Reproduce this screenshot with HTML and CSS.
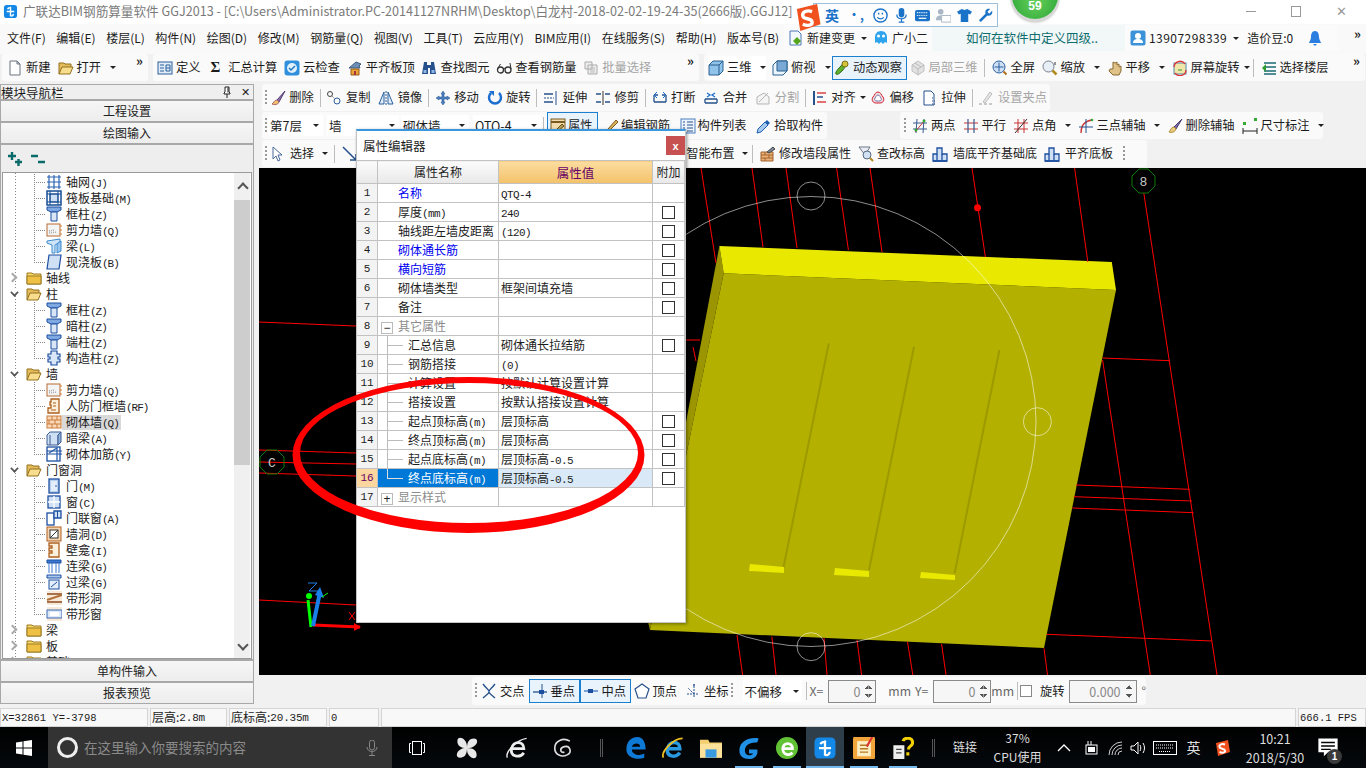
FILE: index.html
```html
<!DOCTYPE html>
<html lang="zh-CN">
<head>
<meta charset="utf-8">
<title>广联达BIM钢筋算量软件 GGJ2013</title>
<link rel="stylesheet" href="styles.css">
</head>
<body>
<svg class="sprite" aria-hidden="true">
<defs>
<symbol id="pinb" viewBox="0 0 12 12"><path d="M4 1h4v5l1 1v1H3V7l1-1zM6 8v4" fill="#fff" stroke="#222"/><path d="M7 1.500v5" stroke="#222"/></symbol>
<symbol id="app" viewBox="0 0 16 16"><rect x="1" y="1" width="14" height="14" rx="3" fill="#1488e6"/><path d="M8 3v10M4 8h8M5 5.500a2 2 0 0 1 3-1M11 10.500a2 2 0 0 1-3 2" stroke="#fff" stroke-width="1.500" fill="none"/></symbol>
<symbol id="doc" viewBox="0 0 16 16"><path d="M3 1h7l3 3v11H3z" fill="#fff" stroke="#6b7280"/><path d="M10 1v3h3z" fill="#d5dbe5" stroke="#6b7280"/></symbol>
<symbol id="newchg" viewBox="0 0 16 16"><path d="M2 1h8l3 3v11H2z" fill="#f4f9ff" stroke="#4b78b4"/><path d="M9 7l4 4-4 4-4-4z" fill="#55a51c"/></symbol>
<symbol id="ghost" viewBox="0 0 16 16"><path d="M8 1c4 0 6 3 6 6v6l-2-1-2 2-2-2-2 2-2-2-2 1V7c0-3 2-6 6-6z" fill="#2ea4ee"/><circle cx="5.500" cy="6" r="1.500" fill="#fff"/><circle cx="10.500" cy="6" r="1.500" fill="#fff"/></symbol>
<symbol id="user" viewBox="0 0 16 16"><rect x=".5" y=".5" width="15" height="15" rx="2" fill="#3c92d8"/><circle cx="8" cy="6" r="3" fill="#fff"/><path d="M3 13c0-3 2-4 5-4s5 1 5 4z" fill="#fff"/></symbol>
<symbol id="bell" viewBox="0 0 16 16"><path d="M8 1c3 0 4 3 4 6 0 3 2 5 2 6H2c0-1 2-3 2-6 0-3 1-6 4-6z" fill="#2a7ee0"/><path d="M6 14h4l-2 2z" fill="#2a7ee0"/></symbol>
<symbol id="folderopen" viewBox="0 0 16 16"><path d="M1 14V3h5l1 1h6v3" fill="#e4bc5c" stroke="#93701e"/><path d="M1 14l3-7h11l-3 7z" fill="#f8de8c" stroke="#93701e"/></symbol>
<symbol id="folder" viewBox="0 0 16 16"><path d="M1 14V3h5l1 1h8v10z" fill="#f6d768" stroke="#9c7a22"/><path d="M1 6h14v8H1z" fill="#eec145" stroke="#9c7a22"/></symbol>
<symbol id="define" viewBox="0 0 16 16"><rect x="1" y="2" width="14" height="12" fill="#e1ecf8" stroke="#2a5f9e"/><path d="M3 5h4M3 8h4M3 11h4M9 5h4v6H9zM9 8h4" stroke="#2a5f9e" fill="none"/></symbol>
<symbol id="cloud" viewBox="0 0 16 16"><rect x=".5" y=".5" width="15" height="15" rx="3" fill="#2f8fdc"/><path d="M3 8a5 5 0 0 1 10 0 5 5 0 0 1-10 0z" fill="#dff0fb"/><path d="M5 8l2 2 4-4" stroke="#1f77c2" stroke-width="1.500" fill="none"/></symbol>
<symbol id="house" viewBox="0 0 16 16"><path d="M2 8l7-6 5 2-2 2 1 2H2z" fill="#6d8fb5" stroke="#3a5a80"/><path d="M4 9h8v6H4z" fill="#e8a43a" stroke="#9a5a12"/><path d="M7 11h2v4H7z" fill="#a33"/></symbol>
<symbol id="binoc" viewBox="0 0 16 16"><path d="M3 2h3v3h4V2h3l2 12H9V8H7v6H1z" fill="#27518c"/><path d="M2.500 10h3v3h-3zM10.500 10h3v3h-3z" fill="#8fb6e6"/></symbol>
<symbol id="glass" viewBox="0 0 16 16"><circle cx="4.500" cy="10" r="3" fill="none" stroke="#333" stroke-width="1.300"/><circle cx="12" cy="10" r="3" fill="none" stroke="#333" stroke-width="1.300"/><path d="M7 9c1-1 1.500-1 2 0M1.500 9l3-5M15 9l-1-6" stroke="#333" fill="none"/></symbol>
<symbol id="batch" viewBox="0 0 16 16"><path d="M2 2h7v7H2zM5 5h9v9H5z" fill="#eee" stroke="#aaa"/><path d="M7 8h5M7 10h5M7 12h5" stroke="#bbb"/></symbol>
<symbol id="cube" viewBox="0 0 16 16"><path d="M1 5l4-4h10v10l-4 4H1z" fill="#8fc3ea" stroke="#295f8d"/><path d="M1 5h10v10M11 5l4-4" fill="none" stroke="#295f8d"/></symbol>
<symbol id="cubeb" viewBox="0 0 16 16"><path d="M1 5l4-4h10v10l-4 4H1z" fill="#eef6fd" stroke="#295f8d"/><path d="M5 1h10v10H5z" fill="#7aa9d6" stroke="#295f8d"/></symbol>
<symbol id="orbit" viewBox="0 0 16 16"><path d="M11 2c2 2 0 6-3 9s-5 4-6 3 1-4 4-7 4-6 5-5z" fill="#5fb12f" stroke="#2c6b13"/><circle cx="11" cy="4" r="3" fill="#d4c43c" stroke="#7c7014"/></symbol>
<symbol id="local" viewBox="0 0 16 16"><path d="M8 1l6 4v6l-6 4-6-4V5z" fill="#e2e2e2" stroke="#c0c0c0"/><path d="M2 5l6 4 6-4M8 9v6M5 3l6 4" stroke="#bbb" fill="none"/></symbol>
<symbol id="magblue" viewBox="0 0 16 16"><circle cx="7" cy="7" r="6" fill="#cfe0f5" stroke="#2a5f9e"/><path d="M7 2.500v9M2.500 7h9" stroke="#2a5f9e"/><path d="M11.500 11.500l3 3" stroke="#b26d1c" stroke-width="2"/></symbol>
<symbol id="mag" viewBox="0 0 16 16"><circle cx="6.500" cy="6.500" r="5.500" fill="#e8eef5" stroke="#78808c"/><path d="M10.500 10.500l4 4" stroke="#b28c1c" stroke-width="2.500"/><path d="M13 2v3" stroke="#333"/></symbol>
<symbol id="hand" viewBox="0 0 16 16"><path d="M3 9l-1 2 4 4h6l2-4V6l-2 1V4l-2 1V2L8 3 6 2v7z" fill="#e0c288" stroke="#8a6b30"/></symbol>
<symbol id="rotscr" viewBox="0 0 16 16"><rect x="2" y="3" width="12" height="11" fill="#f0e6a8" stroke="#58a"/><path d="M2 7a6 6 0 0 1 11-3M14 10a6 6 0 0 1-11 3" fill="none" stroke="#d33" stroke-width="1.300"/><path d="M6 10h4" stroke="#3a8f3a"/></symbol>
<symbol id="floors" viewBox="0 0 16 16"><path d="M3 3h12M3 7h12M3 11h12M3 14h12" stroke="#1a6b74" stroke-width="1.500"/><path d="M5 4L1 8l4 4" fill="#2c9a2c"/></symbol>
<symbol id="brush" viewBox="0 0 16 16"><path d="M15 1L7 10l2 2z" fill="#8b6db0" stroke="#554070"/><path d="M7 10c-3 0-3 3-5 4 2 1 6 1 7-2z" fill="#f0c070" stroke="#a66"/></symbol>
<symbol id="copy" viewBox="0 0 16 16"><circle cx="4" cy="4" r="2.500" fill="none" stroke="#444"/><circle cx="11" cy="11" r="3" fill="none" stroke="#2a5f9e"/><path d="M6 6l3 3" stroke="#666" stroke-dasharray="1 1"/></symbol>
<symbol id="mirror" viewBox="0 0 16 16"><path d="M6 2L1 14h5zM10 2l5 12h-5z" fill="#e0ecf8" stroke="#2a5f9e"/><path d="M8 1v14" stroke="#2a5f9e" stroke-dasharray="2 1"/></symbol>
<symbol id="move" viewBox="0 0 16 16"><path d="M8 1l2 3H9v3h3V6l3 2-3 2V9H9v3h1l-2 3-2-3h1V9H4v1L1 8l3-2v1h3V4H6z" fill="#4a7fbf" stroke="#27518c" stroke-width=".5"/></symbol>
<symbol id="rotate" viewBox="0 0 16 16"><path d="M4 3a6 6 0 1 0 8 0" fill="none" stroke="#1c6fd0" stroke-width="2.500"/><path d="M2 1h5v5z" fill="#1c6fd0"/></symbol>
<symbol id="extend" viewBox="0 0 16 16"><path d="M1 4h9M1 12h9" stroke="#27518c" stroke-width="1.500"/><path d="M13 1v14" stroke="#27518c"/><path d="M1 8h10" stroke="#27518c" stroke-dasharray="2 1"/></symbol>
<symbol id="trim" viewBox="0 0 16 16"><path d="M1 4h5M10 4h5M1 12h5M10 12h5" stroke="#27518c" stroke-width="1.500"/><path d="M8 1v14" stroke="#333"/></symbol>
<symbol id="break" viewBox="0 0 16 16"><path d="M2 5h4M10 5h4M2 12h12M2 5v7M14 5v7" fill="none" stroke="#27518c" stroke-width="1.300"/><path d="M5 2l-3 3 3 3M11 2l3 3-3 3" fill="none" stroke="#1c6fd0"/></symbol>
<symbol id="merge" viewBox="0 0 16 16"><path d="M2 9h12M2 13h12M2 9v4M14 9v4" fill="none" stroke="#27518c" stroke-width="1.300"/><path d="M4 3l3 2-3 2M12 3L9 5l3 2" fill="none" stroke="#1c6fd0" stroke-width="1.300"/></symbol>
<symbol id="split" viewBox="0 0 16 16"><path d="M2 14h12V7L9 3 2 7zM4 12l9-9" fill="#f4f4f4" stroke="#b5b5b5"/></symbol>
<symbol id="align" viewBox="0 0 16 16"><path d="M2 1v14" stroke="#27518c" stroke-width="2"/><path d="M5 3h9M5 12h9" stroke="#d44" stroke-width="1.500"/><path d="M5 7h6" stroke="#27518c" stroke-width="1.500"/></symbol>
<symbol id="offset" viewBox="0 0 16 16"><path d="M8 2c3 0 3 3 5 5 2 3 0 6-3 6H6c-3 0-5-3-3-6 2-2 2-5 5-5z" fill="#f6dede" stroke="#c23"/><path d="M8 5c2 0 2 2 3 3 1 2 0 3-2 3H7c-2 0-3-1-2-3 1-1 1-3 3-3z" fill="#fff" stroke="#77a"/></symbol>
<symbol id="stretch" viewBox="0 0 16 16"><path d="M2 1h7l3 3v11H2z" fill="#fff" stroke="#27518c"/><path d="M10 8l2 0M10 11l3 0M10 14h3" stroke="#27518c" stroke-dasharray="1 1"/></symbol>
<symbol id="grip" viewBox="0 0 16 16"><path d="M5 12L12 2l2 2-7 9z" fill="#e8e8e8" stroke="#bbb"/><path d="M1 14h3M6 14h3M11 14h3" stroke="#bbb" stroke-width="1.500"/></symbol>
<symbol id="prop" viewBox="0 0 16 16"><rect x="1" y="1" width="14" height="14" fill="#f0dcae" stroke="#7a5a1e"/><path d="M1 4h14" stroke="#7a5a1e" stroke-width="2"/><path d="M4 14l8-8 2 2-8 7z" fill="#b69a5a" stroke="#6b5214"/></symbol>
<symbol id="editrebar" viewBox="0 0 16 16"><path d="M1 13h14" stroke="#333" stroke-width="1.500"/><path d="M5 11l8-9 2 2-8 8-3 1z" fill="#d9b35c" stroke="#7a5a1e"/></symbol>
<symbol id="list" viewBox="0 0 16 16"><rect x="1" y="1" width="14" height="14" fill="#eef4fb" stroke="#4a7fbf"/><path d="M3 4h2M3 7h2M3 10h2M3 13h2M7 4h6M7 7h6M7 10h6M7 13h6" stroke="#27518c"/></symbol>
<symbol id="picker" viewBox="0 0 16 16"><path d="M11 2l3 3-2 2-3-3z" fill="#1c5fb0"/><path d="M9 4l3 3-7 7-4 1 1-4z" fill="#a5c8ef" stroke="#1c5fb0"/></symbol>
<symbol id="twop" viewBox="0 0 16 16"><path d="M1 5h14M1 11h14M5 1l-1 14M12 1l-1 14" stroke="#3a5a90"/><path d="M3 14L13 2" stroke="#c33"/><circle cx="4" cy="12" r="1.500" fill="#3a3"/><circle cx="12" cy="3" r="1.500" fill="#3a3"/></symbol>
<symbol id="para" viewBox="0 0 16 16"><path d="M1 5h14M1 11h14" stroke="#c33" stroke-width="1.200"/><path d="M5 1v14M11 1v14" stroke="#3a5a90" stroke-width="1.200"/></symbol>
<symbol id="angle" viewBox="0 0 16 16"><path d="M1 5h14M1 11h14M5 1v14M11 1v14" stroke="#c33"/><path d="M2 15L14 1" stroke="#333"/></symbol>
<symbol id="threep" viewBox="0 0 16 16"><path d="M3 15C3 7 7 3 14 2" fill="none" stroke="#c33" stroke-width="1.300"/><path d="M1 9h14M8 1v14" stroke="#27518c"/><circle cx="14" cy="2" r="1.300" fill="#3a3"/></symbol>
<symbol id="delaxis" viewBox="0 0 16 16"><path d="M15 1L7 9l2 2z" fill="#7a68a8" stroke="#4a3d70"/><path d="M7 9c-3 0-3 3-5 5 3 1 6 0 7-3z" fill="#e8cc80" stroke="#b08a30"/></symbol>
<symbol id="dim" viewBox="0 0 16 16"><rect x="1" y="4" width="3" height="3" fill="#3a3"/><rect x="12" y="0" width="3" height="3" fill="#3a3"/><path d="M1 13h14M1 10v6M15 10v6" stroke="#222"/></symbol>
<symbol id="pointer" viewBox="0 0 16 16"><path d="M2 1v12l3-3 2 5 2-1-2-5h4z" fill="#fff" stroke="#4a6a9a"/></symbol>
<symbol id="linearr" viewBox="0 0 16 16"><path d="M1 1l13 13M14 8v6H8" fill="none" stroke="#27518c" stroke-width="1.500"/></symbol>
<symbol id="brickedit" viewBox="0 0 16 16"><path d="M1 6h12v9H1z" fill="#e9b27a" stroke="#a2622a"/><path d="M1 9h12M1 12h12M5 6v3M9 9v3M5 12v3" stroke="#a2622a"/><path d="M7 6l6-5 2 2-6 4z" fill="#7a8a9a" stroke="#444"/></symbol>
<symbol id="qelev" viewBox="0 0 16 16"><path d="M1 1h11L7 9z" fill="#eaeef4" stroke="#6a7888"/><circle cx="9" cy="9" r="4" fill="#cfe1f3" stroke="#5a6a80"/><path d="M12 12l3 3" stroke="#b58a1c" stroke-width="2"/></symbol>
<symbol id="walign" viewBox="0 0 16 16"><path d="M1 15V8h4V2h5v6h5v7z" fill="#cfe0f5" stroke="#1d4fa0" stroke-width="1.300"/><path d="M5 15V8M10 15V8M1 15h14" stroke="#1d4fa0" stroke-width="1.300"/></symbol>
<symbol id="xpt" viewBox="0 0 16 16"><path d="M2 1c3 4 5 5 6 7s-3 4-6 7M14 1c-3 4-5 5-6 7s3 4 6 7" fill="none" stroke="#27518c" stroke-width="1.300"/></symbol>
<symbol id="perp" viewBox="0 0 16 16"><path d="M1 9h14" stroke="#27518c" stroke-width="1.300"/><path d="M10 1v14" stroke="#27518c"/><rect x="7" y="7" width="5" height="4" fill="#1d4fa0"/></symbol>
<symbol id="midp" viewBox="0 0 16 16"><path d="M1 8h14" stroke="#7aa0d6" stroke-width="2"/><rect x="5" y="6" width="5" height="4" fill="#1d4fa0"/></symbol>
<symbol id="vertex" viewBox="0 0 16 16"><path d="M8 1l7 5-3 9H4L1 6z" fill="#fff" stroke="#27518c" stroke-width="1.200"/></symbol>
<symbol id="coord" viewBox="0 0 16 16"><path d="M2 11h12M9 3v12M9 11l-6-6" stroke="#27518c" stroke-dasharray="2 1"/><circle cx="9" cy="2" r="1" fill="#27518c"/></symbol>
<symbol id="plus2" viewBox="0 0 16 16"><path d="M1 5h8M5 1v8M8 11h7M11.500 8v7" stroke="#0b6b6b" stroke-width="2.400"/></symbol>
<symbol id="minus2" viewBox="0 0 16 16"><path d="M1 5h7M8 11h7" stroke="#0b6b6b" stroke-width="2.400"/></symbol>
<symbol id="grid" viewBox="0 0 16 16"><path d="M1 3h14M1 8h14M1 13h14M3 1v14M8 1v14M13 1v14" stroke="#2a63b4" stroke-width="1.200"/></symbol>
<symbol id="raft" viewBox="0 0 16 16"><rect x="1" y="1" width="14" height="14" fill="#fff" stroke="#154d94" stroke-width="1.500"/><rect x="4" y="4" width="8" height="8" fill="#cfe0f5" stroke="#154d94"/><path d="M1 4h14M1 12h14M4 1v14M12 1v14" stroke="#154d94"/></symbol>
<symbol id="col" viewBox="0 0 16 16"><path d="M1 1h14v3l-4 2H5L1 4z" fill="#7fa8e0" stroke="#1d4fa0"/><path d="M5 6h6v9H5z" fill="#d8e6f8" stroke="#1d4fa0"/></symbol>
<symbol id="shear" viewBox="0 0 16 16"><rect x="1" y="2" width="13" height="12" fill="#f4f4f4" stroke="#b8682e"/><path d="M3 11l8-1M3 9l6-1" stroke="#aaa" stroke-dasharray="1 1" stroke-width="1.500"/><path d="M14 4h2M14 8h2M14 12h2" stroke="#d8812e"/></symbol>
<symbol id="beam" viewBox="0 0 16 16"><path d="M1 3l13-2v3L9 7v8H6V7L1 5z" fill="#cfe4f8" stroke="#3a8ad0"/><path d="M11 6l4-3v10l-4 2z" fill="#9cc6ee" stroke="#3a8ad0"/></symbol>
<symbol id="slab" viewBox="0 0 16 16"><path d="M3 1h12l-2 14H1z" fill="#cfe0f5" stroke="#1d4fa0" stroke-width="1.200"/></symbol>
<symbol id="ccol" viewBox="0 0 16 16"><path d="M5 1h6v3h3v3h-2v2h2v3h-3v3H5v-3H2V9h2V7H2V4h3z" fill="#d8e6f8" stroke="#1d4fa0" stroke-width="1.200"/></symbol>
<symbol id="fwall" viewBox="0 0 16 16"><path d="M5 1h8v14H2v-5h3V7H4V4h1z" fill="#fbf0dc" stroke="#b0601e" stroke-width="1.300"/><path d="M7 5h3M7 8h3M5 12h5" stroke="#b0601e"/></symbol>
<symbol id="brick" viewBox="0 0 16 16"><rect x="1" y="2" width="14" height="12" fill="#f8d8b8" stroke="#cc7a3a"/><path d="M1 6h14M1 10h14M6 2v4M11 2v4M3 6v4M9 6v4M6 10v4M11 10v4" stroke="#cc7a3a"/></symbol>
<symbol id="hbeam" viewBox="0 0 16 16"><path d="M1 5l3-3h11l-3 3v10H1z" fill="#cfe0f5" stroke="#3a5a90"/><path d="M4 5v10M12 5l3-3v10l-3 3z" fill="#8fb0da" stroke="#3a5a90"/></symbol>
<symbol id="brebar" viewBox="0 0 16 16"><rect x="1" y="1" width="13" height="14" fill="#fff" stroke="#1d4fa0" stroke-width="1.300"/><path d="M3 7l8-5v13" fill="none" stroke="#2a63b4" stroke-width="1.300"/><path d="M1 5h15M1 8h15" stroke="#1d4fa0"/></symbol>
<symbol id="door" viewBox="0 0 16 16"><rect x="3" y="1" width="10" height="14" fill="#b8d0f0" stroke="#1d4fa0" stroke-width="1.300"/><rect x="5" y="3" width="6" height="10" fill="#e4eefa"/><circle cx="10" cy="8" r=".8" fill="#1d4fa0"/></symbol>
<symbol id="window" viewBox="0 0 16 16"><rect x="2" y="2" width="12" height="12" fill="#cfe0f5" stroke="#1d4fa0" stroke-width="1.300"/><path d="M8 2v12M2 8h12" stroke="#fff" stroke-width="1.300"/></symbol>
<symbol id="doorwin" viewBox="0 0 16 16"><rect x="1" y="3" width="7" height="12" fill="#fff" stroke="#1d4fa0" stroke-width="1.300"/><path d="M8 1h7v7H8z" fill="#cfe0f5" stroke="#1d4fa0" stroke-width="1.300"/><path d="M11.500 1v7" stroke="#1d4fa0"/></symbol>
<symbol id="hole" viewBox="0 0 16 16"><rect x="1" y="1" width="14" height="14" fill="#f4d4b0" stroke="#b0601e"/><rect x="4" y="4" width="8" height="8" fill="#fff" stroke="#333"/><path d="M4 12l8-8" stroke="#333"/></symbol>
<symbol id="niche" viewBox="0 0 16 16"><path d="M3 1h10v14H3v-4h3V9H3V6h3V4H3z" fill="#fbf0dc" stroke="#b0601e" stroke-width="1.300"/></symbol>
<symbol id="lintel" viewBox="0 0 16 16"><path d="M1 2h14v3H1z" fill="#3a7ad0" stroke="#1d4fa0"/><path d="M3 5v10M6 5v10M10 5v10M13 5v10" stroke="#3a7ad0"/></symbol>
<symbol id="gliang" viewBox="0 0 16 16"><path d="M1 1h14v3H1z" fill="#a8c8ee" stroke="#1d4fa0"/><rect x="3" y="6" width="10" height="9" fill="#e4eefa" stroke="#1d4fa0"/><path d="M5 13l6-5" stroke="#1d4fa0"/></symbol>
<symbol id="bandhole" viewBox="0 0 16 16"><rect x="1" y="1" width="15" height="14" fill="#f8e8d8"/><path d="M1 4h15M1 12h15" stroke="#8a4a1e" stroke-width="1.500"/><path d="M1 10l15-5" stroke="#b0703a" stroke-width="2"/></symbol>
<symbol id="bandwin" viewBox="0 0 16 16"><rect x="1" y="1" width="15" height="14" fill="#f8e8d8"/><rect x="1" y="4" width="15" height="8" fill="#dce8f8" stroke="#3a6ab0"/><rect x="4" y="6" width="9" height="4" fill="#fff"/></symbol>
<symbol id="sogou" viewBox="0 0 16 16"><path d="M2 3l12-3 2 12-12 4z" fill="#f0511e"/><path d="M11 4.500C8 3.500 5 4.500 5.500 7s5 1 5.500 3.500-3 2.500-5.500 1.500" fill="none" stroke="#fff" stroke-width="2"/></symbol>
<symbol id="smile" viewBox="0 0 16 16"><circle cx="8" cy="8" r="7" fill="none" stroke="#1b73c9" stroke-width="1.500"/><path d="M6 5v2M10 5v2" stroke="#1b73c9" stroke-width="1.500"/><path d="M4.500 10c2 2 5 2 7 0" fill="none" stroke="#1b73c9" stroke-width="1.300"/></symbol>
<symbol id="micb" viewBox="0 0 16 16"><rect x="5" y="0" width="6" height="10" rx="3" fill="#1b73c9"/><path d="M3 7c0 6 10 6 10 0M8 12v3M5 15h6" fill="none" stroke="#1b73c9" stroke-width="1.300"/></symbol>
<symbol id="kbb" viewBox="0 0 16 16"><rect x="0" y="2" width="16" height="12" rx="2" fill="#1b73c9"/><path d="M2 5h12M2 8h12" stroke="#fff" stroke-dasharray="1 1" stroke-width="1.300"/><path d="M4 11h8" stroke="#fff" stroke-width="1.300"/></symbol>
<symbol id="ucard" viewBox="0 0 16 16"><circle cx="5" cy="4" r="3" fill="#a9b7c6"/><path d="M0 13c0-4 2-5 5-5s5 1 5 5z" fill="#a9b7c6"/><rect x="6" y="8" width="10" height="7" fill="#fff" stroke="#a9b7c6"/></symbol>
<symbol id="shirt" viewBox="0 0 16 16"><path d="M5 1l3 1 3-1 5 3-2 3-2-1v9H4V6L2 7 0 4z" fill="#1b73c9"/></symbol>
<symbol id="wrench" viewBox="0 0 16 16"><path d="M15 3l-3 3-2-2 3-3c-3-1-6 1-5 5L1 13l2 2 7-7c4 1 6-2 5-5z" fill="#1b73c9"/></symbol>
<symbol id="win" viewBox="0 0 16 16"><path d="M0 2.500l6.500-1V7.500H0zM7.500 1.300L16 0v7.500H7.500zM0 8.500h6.500v6L0 13.500zM7.500 8.500H16V16l-8.500-1.300z" fill="#fff"/></symbol>
<symbol id="mict" viewBox="0 0 16 16"><rect x="5.500" y="0" width="5" height="10" rx="2.500" fill="none" stroke="#888"/><path d="M3 7c0 6 10 6 10 0M8 12v3M5 15.500h6" fill="none" stroke="#888"/></symbol>
<symbol id="taskv" viewBox="0 0 16 16"><rect x="3.500" y="1.500" width="9" height="13" fill="none" stroke="#fff"/><path d="M2 3.500H.5v9H2M14 3.500h1.500v9H14" fill="none" stroke="#fff"/></symbol>
<symbol id="fan" viewBox="0 0 16 16"><path d="M8 8C3 8 1 6 1 3s3-3 5-1 2 4 2 6zM8 8c0-5 2-7 5-7s3 3 1 5-4 2-6 2zM8 8c5 0 7 2 7 5s-3 3-5 1-2-4-2-6zM8 8c0 5-2 7-5 7s-3-3-1-5 4-2 6-2z" fill="#e8e8e8"/></symbol>
<symbol id="ieo" viewBox="0 0 16 16"><path d="M3 8.500h10c0-6-8-6-9 0s6 7 9 3" fill="none" stroke="#eee" stroke-width="2"/><path d="M1 15C-1 11 8 2 15 1" fill="none" stroke="#eee"/></symbol>
<symbol id="gsp" viewBox="0 0 16 16"><path d="M13 3C8 0 2 3 2 8s5 7 9 5 2-7-2-6-3 5 0 4" fill="none" stroke="#ddd" stroke-width="1.200"/></symbol>
<symbol id="edge" viewBox="0 0 16 16"><path d="M1 9C1 3 5 0 9 0s6 4 6 9H5c0 4 6 5 9 3v3c-5 2-13 0-13-6zm4-2h6c0-3-5-3-6 0z" fill="#0f7ad6"/></symbol>
<symbol id="ie" viewBox="0 0 16 16"><path d="M3 8.500h10c0-6-8-6-9 0s6 7 9 3" fill="none" stroke="#2a9ae0" stroke-width="2.500"/><path d="M1 15C-1 11 8 1 15 1" fill="none" stroke="#f0c020" stroke-width="1.300"/></symbol>
<symbol id="tfold" viewBox="0 0 16 16"><path d="M0 2h6l1 2h9v11H0z" fill="#f4cf72"/><path d="M0 5h16v10H0z" fill="#fbe19a"/><rect x="4" y="9" width="8" height="6" fill="#3a9ae0"/></symbol>
<symbol id="gblue" viewBox="0 0 16 16"><path d="M15 1C8 0 1 3 1 10c0 4 3 6 7 6 4 0 7-3 6-7H8v3h3c-1 2-6 2-6-2 0-5 5-6 9-6z" fill="#1f90e6"/></symbol>
<symbol id="eg" viewBox="0 0 16 16"><circle cx="8" cy="8" r="8" fill="#62c236"/><path d="M4 8.500h8c0-5-7-5-7 0s5 5 7 3" fill="none" stroke="#fff" stroke-width="2"/></symbol>
<symbol id="notes" viewBox="0 0 16 16"><rect width="16" height="16" rx="1" fill="#f2a53a"/><rect x="3" y="3" width="10" height="11" fill="#fbeec4"/><path d="M5 6h6M5 8.500h6M5 11h6" stroke="#b87a20"/><path d="M14 0l-4 7" stroke="#d33" stroke-width="1.500"/></symbol>
<symbol id="help" viewBox="0 0 16 16"><rect x="1" y="6" width="8" height="10" fill="#eee"/><path d="M3 9h4M3 11.500h4" stroke="#444"/><path d="M8 3c1-3 7-3 7 1 0 3-3 2-3 5M11.500 11v2.500" fill="none" stroke="#f3d000" stroke-width="2.200"/></symbol>
<symbol id="caretup" viewBox="0 0 16 16"><path d="M2 11l6-6 6 6" fill="none" stroke="#fff" stroke-width="1.300"/></symbol>
<symbol id="batt" viewBox="0 0 16 16"><rect x="3" y="5" width="11" height="9" fill="none" stroke="#fff"/><rect x="5" y="7" width="7" height="5" fill="#fff"/><path d="M5 1v4M8 1v4" stroke="#fff"/></symbol>
<symbol id="wifi" viewBox="0 0 16 16"><path d="M2 15a13 13 0 0 1 13-13M5 15a10 10 0 0 1 10-10M8 15a7 7 0 0 1 7-7M11 15a4 4 0 0 1 4-4" fill="none" stroke="#ccc"/></symbol>
<symbol id="speak" viewBox="0 0 16 16"><path d="M1 6h3l4-4v12l-4-4H1z" fill="none" stroke="#fff"/><path d="M10 5c1 2 1 4 0 6M13 3c2 3 2 7 0 10" fill="none" stroke="#fff"/></symbol>
<symbol id="keyb" viewBox="0 0 24 16"><rect x=".5" y="1.500" width="23" height="13" fill="none" stroke="#fff"/><path d="M3 5h18M3 8h18M6 11.500h12" stroke="#fff" stroke-dasharray="1 1"/></symbol>
<symbol id="notif" viewBox="0 0 16 16"><path d="M1 1h14v10H8l-3 3v-3H1z" fill="#fff"/><path d="M3 4h10M3 6.500h10M3 9h7" stroke="#000"/></symbol>
</defs>
</svg>

<div class="app">
  <header class="titlebar">
    <svg class="i tapp"><use href="#app"/></svg>
    <span class="title">广联达BIM钢筋算量软件 GGJ2013 - [C:\Users\Administrator.PC-20141127NRHM\Desktop\白龙村-2018-02-02-19-24-35(2666版).GGJ12]</span>
    <div class="winbtns"><span class="wb wmin"></span><span class="wb wmax"></span><span class="wb wclose">✕</span></div>
  </header>

  <nav class="menubar">
    <div class="menus">
      <span>文件(F)</span><span>编辑(E)</span><span>楼层(L)</span><span>构件(N)</span><span>绘图(D)</span><span>修改(M)</span><span>钢筋量(Q)</span><span>视图(V)</span><span>工具(T)</span><span>云应用(Y)</span><span>BIM应用(I)</span><span>在线服务(S)</span><span>帮助(H)</span><span>版本号(B)</span>
    </div>
    <div class="mgrp mg1"><span class="t"><svg class="i"><use href="#newchg"/></svg>新建变更<i class="c"></i></span><span class="t gx"><svg class="i"><use href="#ghost"/></svg>广小二</span></div>
    <div class="ask">如何在软件中定义四级..</div>
    <div class="mgrp mg2"><span class="t"><svg class="i"><use href="#user"/></svg><span class="phone">13907298339</span><i class="c"></i></span><span class="t">造价豆:0</span><svg class="i bell"><use href="#bell"/></svg></div>
    <span class="more m1">»</span>
  </nav>

  <div class="tbrow r1">
    <div class="tg g11">
      <span class="t"><svg class="i"><use href="#doc"/></svg>新建</span>
      <span class="t"><svg class="i"><use href="#folderopen"/></svg>打开<i class="c"></i></span>
      <span class="more">»</span>
    </div>
    <div class="tg g12">
      <span class="t"><svg class="i"><use href="#define"/></svg>定义</span>
      <span class="t"><b class="sig">Σ</b>汇总计算</span>
      <span class="t"><svg class="i"><use href="#cloud"/></svg>云检查</span>
      <span class="t"><svg class="i"><use href="#house"/></svg>平齐板顶</span>
      <span class="t"><svg class="i"><use href="#binoc"/></svg>查找图元</span>
      <span class="t"><svg class="i"><use href="#glass"/></svg>查看钢筋量</span>
      <span class="t off"><svg class="i"><use href="#batch"/></svg>批量选择</span>
      <span class="more">»</span>
    </div>
    <div class="tg g13">
      <span class="t wh"><svg class="i"><use href="#cube"/></svg>三维<i class="c"></i></span>
      <span class="t"><svg class="i"><use href="#cubeb"/></svg>俯视<i class="c"></i></span>
      <span class="t sel"><svg class="i"><use href="#orbit"/></svg>动态观察</span>
      <span class="t off"><svg class="i"><use href="#local"/></svg>局部三维</span>
      <span class="sep"></span>
      <span class="t"><svg class="i"><use href="#magblue"/></svg>全屏</span>
      <span class="t"><svg class="i"><use href="#mag"/></svg>缩放<i class="c"></i></span>
      <span class="t"><svg class="i"><use href="#hand"/></svg>平移<i class="c"></i></span>
      <span class="t"><svg class="i"><use href="#rotscr"/></svg>屏幕旋转<i class="c tight"></i></span>
      <span class="sep"></span>
      <span class="t"><svg class="i"><use href="#floors"/></svg>选择楼层</span>
      <span class="more">»</span>
    </div>
  </div>

  <main class="work">
    <aside class="side">
      <div class="sidehead"><span>模块导航栏</span><svg class="pin"><use href="#pinb"/></svg><span class="xx">✕</span></div>
      <button class="navbtn">工程设置</button>
      <button class="navbtn">绘图输入</button>
      <section class="treewrap">
        <div class="treetools"><svg class="i"><use href="#plus2"/></svg><svg class="i"><use href="#minus2"/></svg></div>
        <div class="tree">
          <ul class="rows">
            <li class="l2"><svg class="i"><use href="#grid"/></svg><span>轴网<em>(J)</em></span></li>
            <li class="l2"><svg class="i"><use href="#raft"/></svg><span>筏板基础<em>(M)</em></span></li>
            <li class="l2"><svg class="i"><use href="#col"/></svg><span>框柱<em>(Z)</em></span></li>
            <li class="l2"><svg class="i"><use href="#shear"/></svg><span>剪力墙<em>(Q)</em></span></li>
            <li class="l2"><svg class="i"><use href="#beam"/></svg><span>梁<em>(L)</em></span></li>
            <li class="l2 last"><svg class="i"><use href="#slab"/></svg><span>现浇板<em>(B)</em></span></li>
            <li class="l1"><i class="ar rt"></i><svg class="i"><use href="#folder"/></svg><span>轴线</span></li>
            <li class="l1"><i class="ar dn"></i><svg class="i"><use href="#folderopen"/></svg><span>柱</span></li>
            <li class="l2"><svg class="i"><use href="#col"/></svg><span>框柱<em>(Z)</em></span></li>
            <li class="l2"><svg class="i"><use href="#col"/></svg><span>暗柱<em>(Z)</em></span></li>
            <li class="l2"><svg class="i"><use href="#col"/></svg><span>端柱<em>(Z)</em></span></li>
            <li class="l2 last"><svg class="i"><use href="#ccol"/></svg><span>构造柱<em>(Z)</em></span></li>
            <li class="l1"><i class="ar dn"></i><svg class="i"><use href="#folderopen"/></svg><span>墙</span></li>
            <li class="l2"><svg class="i"><use href="#shear"/></svg><span>剪力墙<em>(Q)</em></span></li>
            <li class="l2"><svg class="i"><use href="#fwall"/></svg><span>人防门框墙<em>(RF)</em></span></li>
            <li class="l2 cur"><svg class="i"><use href="#brick"/></svg><span>砌体墙<em>(Q)</em></span></li>
            <li class="l2"><svg class="i"><use href="#hbeam"/></svg><span>暗梁<em>(A)</em></span></li>
            <li class="l2 last"><svg class="i"><use href="#brebar"/></svg><span>砌体加筋<em>(Y)</em></span></li>
            <li class="l1"><i class="ar dn"></i><svg class="i"><use href="#folderopen"/></svg><span>门窗洞</span></li>
            <li class="l2"><svg class="i"><use href="#door"/></svg><span>门<em>(M)</em></span></li>
            <li class="l2"><svg class="i"><use href="#window"/></svg><span>窗<em>(C)</em></span></li>
            <li class="l2"><svg class="i"><use href="#doorwin"/></svg><span>门联窗<em>(A)</em></span></li>
            <li class="l2"><svg class="i"><use href="#hole"/></svg><span>墙洞<em>(D)</em></span></li>
            <li class="l2"><svg class="i"><use href="#niche"/></svg><span>壁龛<em>(I)</em></span></li>
            <li class="l2"><svg class="i"><use href="#lintel"/></svg><span>连梁<em>(G)</em></span></li>
            <li class="l2"><svg class="i"><use href="#gliang"/></svg><span>过梁<em>(G)</em></span></li>
            <li class="l2"><svg class="i"><use href="#bandhole"/></svg><span>带形洞</span></li>
            <li class="l2 last"><svg class="i"><use href="#bandwin"/></svg><span>带形窗</span></li>
            <li class="l1"><i class="ar rt"></i><svg class="i"><use href="#folder"/></svg><span>梁</span></li>
            <li class="l1"><i class="ar rt"></i><svg class="i"><use href="#folder"/></svg><span>板</span></li>
            <li class="l1"><i class="ar rt"></i><svg class="i"><use href="#folder"/></svg><span>基础</span></li>
          </ul>
          <div class="vbar"><span class="sb up"></span><span class="thumb"></span><span class="rest"></span><span class="sb down"></span></div>
        </div>
      </section>
      <button class="navbtn">单构件输入</button>
      <button class="navbtn">报表预览</button>
    </aside>

    <div class="right">
      <div class="tbrow r2">
        <div class="tg g21">
          <span class="dots"></span>
          <span class="t"><svg class="i"><use href="#brush"/></svg>删除</span><span class="sep"></span>
          <span class="t"><svg class="i"><use href="#copy"/></svg>复制</span>
          <span class="t"><svg class="i"><use href="#mirror"/></svg>镜像</span><span class="sep"></span>
          <span class="t"><svg class="i"><use href="#move"/></svg>移动</span>
          <span class="t"><svg class="i"><use href="#rotate"/></svg>旋转</span><span class="sep"></span>
          <span class="t"><svg class="i"><use href="#extend"/></svg>延伸</span>
          <span class="t"><svg class="i"><use href="#trim"/></svg>修剪</span><span class="sep"></span>
          <span class="t"><svg class="i"><use href="#break"/></svg>打断</span>
          <span class="t"><svg class="i"><use href="#merge"/></svg>合并</span>
          <span class="t off"><svg class="i"><use href="#split"/></svg>分割</span><span class="sep"></span>
          <span class="t"><svg class="i"><use href="#align"/></svg>对齐<i class="c"></i></span>
          <span class="t"><svg class="i"><use href="#offset"/></svg>偏移</span>
          <span class="t"><svg class="i"><use href="#stretch"/></svg>拉伸</span><span class="sep"></span>
          <span class="t off"><svg class="i"><use href="#grip"/></svg>设置夹点</span>
        </div>
      </div>
      <div class="tbrow r3">
        <div class="tg g31">
          <span class="dots"></span>
          <span class="combo cb1">第7层<i class="c"></i></span>
          <span class="combo cb2">墙<i class="c"></i></span>
          <span class="combo cb3">砌体墙<i class="c"></i></span>
          <span class="combo cb4">QTQ-4<i class="c"></i></span>
          <span class="sep"></span>
          <span class="t sel"><svg class="i"><use href="#prop"/></svg>属性</span>
          <span class="t"><svg class="i"><use href="#editrebar"/></svg>编辑钢筋</span>
          <span class="t"><svg class="i"><use href="#list"/></svg>构件列表</span>
          <span class="t"><svg class="i"><use href="#picker"/></svg>拾取构件</span>
        </div>
        <div class="tg g32">
          <span class="dots"></span>
          <span class="t"><svg class="i"><use href="#twop"/></svg>两点</span>
          <span class="t"><svg class="i"><use href="#para"/></svg>平行</span>
          <span class="t"><svg class="i"><use href="#angle"/></svg>点角<i class="c"></i></span>
          <span class="t"><svg class="i"><use href="#threep"/></svg>三点辅轴<i class="c"></i></span>
          <span class="t"><svg class="i"><use href="#delaxis"/></svg>删除辅轴</span>
          <span class="t"><svg class="i"><use href="#dim"/></svg>尺寸标注<i class="c"></i></span>
        </div>
      </div>
      <div class="tbrow r4">
        <div class="tg g41">
          <span class="dots"></span>
          <span class="t"><svg class="i"><use href="#pointer"/></svg>选择<i class="c"></i></span>
          <span class="sep"></span>
          <svg class="i"><use href="#linearr"/></svg>
          <span class="hidspace"></span>
          <span class="t sm">智能布置<i class="c"></i></span>
          <span class="sep"></span>
          <span class="t"><svg class="i"><use href="#brickedit"/></svg>修改墙段属性</span>
          <span class="t"><svg class="i"><use href="#qelev"/></svg>查改标高</span>
          <span class="t wd"><svg class="i"><use href="#walign"/></svg>墙底平齐基础底</span>
          <span class="t wd"><svg class="i"><use href="#walign"/></svg>平齐底板</span>
          <span class="dots"></span>
        </div>
      </div>

      <section class="canvas">
        <svg class="scene" viewBox="259 168 1107 507" aria-hidden="true">
          <polygon points="719.4,246 723.7,273.3 650,630 648,622" fill="#9a9500"/>
          <polygon points="723.7,273.300 1116,290 1044,648 650,630" fill="#b3b000"/>
          <polygon points="719.4,246 1111.8,262 1116,290 723.7,273.3" fill="#e8e800"/>
          <g stroke="#9d9a00" stroke-width="2"><path d="M828.8 343.300L783.3 568.300M914 346.700L869 570M999.4 350L954.7 573"/></g>
          <g fill="#e8e800"><polygon points="750,564 784,567 784,573 749,571"/><polygon points="835,568 869,571 869,577 834,575"/><polygon points="921,572 955,575 955,580 920,578"/></g>
          <g stroke="#f00" stroke-width="1" fill="none">
            <path d="M701 168L716 263M752 168L763 247M786 168L797 248M836.6 168L848.4 250M870 168L882 252M972 168L985.4 257M1074.6 168L1087.8 262M1143.8 193L1217 675"/>
            <path d="M1102.6 358L1170 360.700M1102.6 360L1150.300 675M1076 485L1189.700 489.300M1073.800 496.700L1192 501M1072.400 508L1193.600 512.700M1046.600 634.300L1212 641"/>
            <path d="M737 635L742.600 675M771.900 636.700L776 675M824 638L827 675M857 640L861.600 675M907.500 641.700L912.800 675M941.600 644L946 675M1044 648.300L1047.500 675"/>
            <path d="M686 340H700M693 347L696 361M259 322L356 326M259 450L356 453M259 462L356 464M259 473L356 476M259 600L356 605"/>
          </g>
          <circle cx="977.500" cy="207.700" r="3.500" fill="#f00"/>
          <g fill="none" stroke="#fff" stroke-opacity=".55">
            <circle cx="811" cy="421.500" r="225"/>
            <circle cx="811" cy="196" r="14"/>
            <circle cx="1037.400" cy="421.700" r="14"/>
            <circle cx="811" cy="646.700" r="14"/>
          </g>
          <g fill="none" stroke="#0a7a0a">
            <polygon points="1139,169 1148,169 1155,176 1155,186 1148,193 1139,193 1132,186 1132,176"/>
            <polygon points="267,450 277,450 284,457 284,467 277,474 267,474 260,467 260,457"/>
          </g>
          <text x="1143.500" y="186" class="axtxt">8</text>
          <text x="272" y="467" class="axtxt">C</text>
          <g>
            <path d="M313 625L360 627" stroke="#f00" stroke-width="3"/><path d="M354 623L361 627L354 631z" fill="#f00"/>
            <path d="M311 627L308 600" stroke="#0f0" stroke-width="3"/><circle cx="309" cy="596" r="3" fill="#0f0"/>
            <path d="M313 626L320 592" stroke="#1a7fe8" stroke-width="4"/><path d="M315 595L320 587L324 598z" fill="#1a7fe8"/>
            <path d="M308 583H317L309 591H318" fill="none" stroke="#1a7fe8"/>
            <path d="M322 597L328 593" stroke="#0f0"/>
            <path d="M349 612L355 620M355 612L349 620" stroke="#f00"/>
          </g>
        </svg>
      </section>

      <div class="tbrow snap">
        <div class="tg gsnap">
          <span class="dots"></span>
          <span class="t s0"><svg class="i"><use href="#xpt"/></svg>交点</span>
          <span class="t sel s1"><svg class="i"><use href="#perp"/></svg>垂点</span>
          <span class="t sel s2"><svg class="i"><use href="#midp"/></svg>中点</span>
          <span class="t"><svg class="i"><use href="#vertex"/></svg>顶点</span>
          <span class="t s3"><svg class="i"><use href="#coord"/></svg>坐标</span>
          <span class="dots"></span>
          <span class="combo cb5">不偏移<i class="c"></i></span>
          <span class="sep"></span>
          <span class="lb">X=</span>
          <span class="spin sp1">0<i class="spn"></i></span>
          <span class="lb">mm</span>
          <span class="lb">Y=</span>
          <span class="spin sp2">0<i class="spn"></i></span>
          <span class="lb mm2">mm</span>
          <span class="sep"></span>
          <span class="cbx"></span>
          <span class="rot">旋转</span>
          <span class="spin sp3">0.000<i class="spn"></i></span>
          <span class="lb">°</span>
        </div>
      </div>
    </div>
  </main>

  <footer class="status">
    <span class="st s-a mono">X=32861 Y=-3798</span>
    <span class="st s-b">层高:<em>2.8m</em></span>
    <span class="st s-c">底标高:<em>20.35m</em></span>
    <span class="st s-d mono">0</span>
    <span class="st s-e"></span>
    <span class="st s-f mono">666.1 FPS</span>
  </footer>

  <div class="taskbar">
    <span class="tk"><svg class="i tw"><use href="#win"/></svg></span>
    <span class="search"><i class="cort"></i><span class="stext">在这里输入你要搜索的内容</span><svg class="i smic"><use href="#mict"/></svg></span>
    <span class="tk"><svg class="i"><use href="#taskv"/></svg></span>
    <span class="tk"><svg class="i ti"><use href="#fan"/></svg></span>
    <span class="tk"><svg class="i ti"><use href="#ieo"/></svg></span>
    <span class="tk"><svg class="i ti"><use href="#gsp"/></svg></span>
    <span class="tk"><i class="tsep"></i></span>
    <span class="tk"><svg class="i ti"><use href="#edge"/></svg></span>
    <span class="tk"><svg class="i ti"><use href="#ie"/></svg></span>
    <span class="tk"><svg class="i ti"><use href="#tfold"/></svg></span>
    <span class="tk run"><svg class="i ti"><use href="#gblue"/></svg></span>
    <span class="tk run"><svg class="i ti"><use href="#eg"/></svg></span>
    <span class="tk run act"><svg class="i tl"><use href="#app"/></svg></span>
    <span class="tk run"><svg class="i ti"><use href="#notes"/></svg></span>
    <span class="tk run"><svg class="i ti"><use href="#help"/></svg></span>
    <span class="tk"><i class="tsep"></i></span>
    <span class="tk ttxt">链接</span>
    <span class="tk ttxt two"><span>37%</span><span>CPU使用</span></span>
    <span class="tk"><svg class="i"><use href="#caretup"/></svg></span>
    <span class="tk"><svg class="i"><use href="#batt"/></svg></span>
    <span class="tk"><svg class="i"><use href="#wifi"/></svg></span>
    <span class="tk"><svg class="i"><use href="#speak"/></svg></span>
    <span class="tk"><svg class="i kb"><use href="#keyb"/></svg></span>
    <span class="tk ttxt big">英</span>
    <span class="tk"><svg class="i"><use href="#sogou"/></svg></span>
    <span class="tk ttxt two clock"><span>10:21</span><span>2018/5/30</span></span>
    <span class="tk nf"><svg class="i ti"><use href="#notif"/></svg><b class="nbadge">1</b></span>
  </div>

  <div class="ball">59</div>
  <div class="ime">
    <svg class="imes"><use href="#sogou"/></svg>
    <b class="imeen">英</b><span class="imedot">•,</span>
    <svg class="i"><use href="#smile"/></svg><svg class="i"><use href="#micb"/></svg><svg class="i"><use href="#kbb"/></svg><svg class="i"><use href="#ucard"/></svg><svg class="i"><use href="#shirt"/></svg><svg class="i"><use href="#wrench"/></svg>
  </div>

  <section class="dialog">
    <div class="dhead"><span>属性编辑器</span><span class="dx">x</span></div>
    <table class="ptable">
      <colgroup><col class="c0"><col class="c1"><col class="c2"><col class="c3"></colgroup>
      <thead><tr><th></th><th>属性名称</th><th class="hv">属性值</th><th>附加</th></tr></thead>
      <tbody>
        <tr><td class="n">1</td><td class="nm blue">名称</td><td class="v"><em>QTQ-4</em></td><td></td></tr>
        <tr><td class="n">2</td><td class="nm">厚度<em>(mm)</em></td><td class="v"><em>240</em></td><td class="ck"><i></i></td></tr>
        <tr><td class="n">3</td><td class="nm">轴线距左墙皮距离</td><td class="v"><em>(120)</em></td><td class="ck"><i></i></td></tr>
        <tr><td class="n">4</td><td class="nm blue">砌体通长筋</td><td class="v"></td><td class="ck"><i></i></td></tr>
        <tr><td class="n">5</td><td class="nm blue">横向短筋</td><td class="v"></td><td class="ck"><i></i></td></tr>
        <tr><td class="n">6</td><td class="nm">砌体墙类型</td><td class="v">框架间填充墙</td><td class="ck"><i></i></td></tr>
        <tr><td class="n">7</td><td class="nm">备注</td><td class="v"></td><td class="ck"><i></i></td></tr>
        <tr><td class="n">8</td><td class="gp"><i class="bx">−</i>其它属性</td><td class="v"></td><td></td></tr>
        <tr><td class="n">9</td><td class="sub">汇总信息</td><td class="v">砌体通长拉结筋</td><td class="ck"><i></i></td></tr>
        <tr><td class="n">10</td><td class="sub">钢筋搭接</td><td class="v"><em>(0)</em></td><td></td></tr>
        <tr><td class="n">11</td><td class="sub">计算设置</td><td class="v">按默认计算设置计算</td><td></td></tr>
        <tr><td class="n">12</td><td class="sub">搭接设置</td><td class="v">按默认搭接设置计算</td><td></td></tr>
        <tr><td class="n">13</td><td class="sub">起点顶标高<em>(m)</em></td><td class="v">层顶标高</td><td class="ck"><i></i></td></tr>
        <tr><td class="n">14</td><td class="sub">终点顶标高<em>(m)</em></td><td class="v">层顶标高</td><td class="ck"><i></i></td></tr>
        <tr><td class="n">15</td><td class="sub">起点底标高<em>(m)</em></td><td class="v">层顶标高<em>-0.5</em></td><td class="ck"><i></i></td></tr>
        <tr class="on"><td class="n">16</td><td class="sub end">终点底标高<em>(m)</em></td><td class="v">层顶标高<em>-0.5</em></td><td class="ck"><i></i></td></tr>
        <tr><td class="n">17</td><td class="gp gp2"><i class="bx">+</i>显示样式</td><td class="v"></td><td></td></tr>
      </tbody>
    </table>
  </section>

  <svg class="ring" viewBox="0 0 1366 768" aria-hidden="true">
    <path fill="#f00" fill-rule="evenodd" d="M292.500 455a176 78 0 1 0 352 0a176 78 0 1 0-352 0zM300 453a169 70 0 1 1 338 0a169 70 0 1 1-338 0z"/>
  </svg>
</div>
</body>
</html>
```
FILE: styles.css
```css
* { box-sizing: border-box; }
html, body { margin: 0; width: 1366px; height: 768px; overflow: hidden; }
body { font: 12px/1.2 "Noto Sans CJK SC", "Liberation Sans", sans-serif; color: #1c1c1c; background: #f1f1f1; }
ul { list-style: none; margin: 0; padding: 0; }
em { font: 11px "Liberation Mono", monospace; letter-spacing: -.6px; }
i { font-style: normal; }
.sprite { position: absolute; width: 0; height: 0; }
.i { width: 16px; height: 16px; flex: none; display: block; }
.app { position: relative; width: 1366px; height: 768px; display: flex; flex-direction: column; overflow: hidden; }

.titlebar { height: 24px; background: #fff; display: flex; align-items: center; padding: 0 0 2px 3px; flex: none; }
.tapp { width: 15px; height: 15px; }
.title { margin-left: 5px; color: #7a7a7a; font-size: 12.620px; white-space: nowrap; }
.winbtns { display: flex; width: 138px; height: 22px; align-items: center; justify-content: space-between; padding: 0 20px 0 0; position: absolute; right: 0; top: 0; }
.wb { width: 10px; display: block; color: #999; }
.wmin { height: 1px; background: #999; margin-left: 18px; }
.wmax { height: 11px; border: 1px solid #999; }
.wclose { font-size: 13px; }

.menubar { height: 30px; background: #f9f9f9; display: flex; align-items: center; flex: none; position: relative; white-space: nowrap; padding-bottom: 2px; }
.menus { display: flex; gap: 10.600px; padding-left: 7px; width: 784px; }
.mgrp { display: flex; align-items: center; background: #fbfbfb; height: 26px; }
.mg1 { width: 148px; gap: 6px; padding-left: 4px; }
.gx { gap: 5px; }
.ask { width: 193px; height: 26px; line-height: 26px; color: #0e6e6e; font-size: 12.500px; padding-left: 34px; background: #f2f7f8; }
.mg2 { width: 213px; padding-left: 5px; gap: 8px; }
.phone { letter-spacing: .45px; }
.bell { margin-left: 6px; }
.more { font-size: 13px; font-weight: 700; line-height: 10px; align-self: flex-start; margin: 2px 5px 0 auto; }
.m1 { position: absolute; right: 0; top: 3px; }

.tbrow { display: flex; height: 28px; flex: none; white-space: nowrap; }
.r1 { height: 30px; padding: 0 0 3px 2px; gap: 5px; }
.tg { display: flex; align-items: center; background: #fafafa; height: 100%; border-radius: 3px; font-size: 12.250px; }
.t { display: inline-flex; align-items: center; gap: 3px; flex: none; height: 100%; }
.c { display: inline-block; width: 0; height: 0; border: 3.500px solid transparent; border-top-color: #222; border-bottom: 0; margin-left: 3px; }
.off { color: #a5a5a5; }
.sep { width: 1px; height: 18px; background: #bdbdbd; flex: none; }
.dots { width: 2px; height: 16px; flex: none; background: repeating-linear-gradient(#999 0 2px, transparent 2px 4px); }
.sig { font: 700 15px "Liberation Serif", serif; width: 16px; text-align: center; margin-right: 2px; }
.sel { background: #e9f3fc; outline: 1px solid #1b7fd0; outline-offset: -1px; }
.wh { background: #fff; }
.g11 { width: 146px; padding-left: 5px; gap: 7px; }
.g11 .c { margin-left: 6px; }
.g12 { width: 546px; padding-left: 4px; gap: 6.800px; }
.g13 { width: 661px; padding-left: 4px; gap: 6.500px; }
.g13 .t { height: 24px; }
.g13 .c { margin-left: 6px; }
.g13 .wh .c { margin-left: 5px; }
.g13 .c.tight { margin: 0 -3px 0 1px; }
.g13 .sel { padding: 0 2px; width: 75px; margin-left: -5px; }
.g13 .off { margin-left: -4px; }

.work { flex: none; height: 624px; display: flex; }
.side { width: 254px; flex: none; display: flex; flex-direction: column; }
.sidehead { height: 16px; display: flex; align-items: center; font-size: 12.500px; border: 1px solid #aaa; background: #efefef; }
.pin { margin-left: auto; width: 12px; height: 12px; margin-right: 8px; }
.xx { font-size: 11px; margin-right: 3px; }
.navbtn { height: 22px; flex: none; font: inherit; color: #222; background: linear-gradient(#f6f6f6, #ededed); border: 1px solid #a8a8a8; padding: 0; }
.treewrap { height: 516px; flex: none; border: 1px solid #a8a8a8; display: flex; flex-direction: column; padding: 0 1px; background: #eee; }
.treetools { height: 27px; flex: none; display: flex; align-items: center; gap: 7px; padding-left: 5px; }
.tree { flex: 1; min-height: 0; display: flex; background: #fff; border: 1px solid #9a9a9a; overflow: hidden; background-image: repeating-linear-gradient(#888 0 1px, transparent 1px 3px); background-size: 1px 100%; background-position: 12px 0; background-repeat: no-repeat; }
.rows { flex: 1; overflow: hidden; padding-top: 1px; }
.rows li { height: 16px; display: flex; align-items: center; position: relative; white-space: nowrap; font-size: 12px; }
.rows li em { letter-spacing: -1px; }
.l1 { padding-left: 23px; }
.l1 span { margin-left: 4px; }
.l2 { padding-left: 43px; background: repeating-linear-gradient(90deg, #888 0 1px, transparent 1px 2px) 31px 8px/11px 1px no-repeat, repeating-linear-gradient(#888 0 1px, transparent 1px 2px) 31px 0/1px 100% no-repeat; }
.l2.last { background: repeating-linear-gradient(90deg, #888 0 1px, transparent 1px 2px) 31px 8px/11px 1px no-repeat, repeating-linear-gradient(#888 0 1px, transparent 1px 2px) 31px 0/1px 9px no-repeat; }
.l2 span { margin-left: 4px; }
.cur span { background: #d9d9d9; padding-left: 4px; margin-left: 0; padding-right: 2px; }
.ar { position: absolute; left: 8px; top: 4px; width: 7px; height: 7px; border: solid #777; border-width: 0 2px 2px 0; }
.rt { transform: rotate(-45deg); left: 6px; background: #fff; border-color: #aaa; }
.dn { transform: rotate(45deg) scale(.85); top: 3px; background: #fff; border-color: #555; }
.vbar { width: 16px; flex: none; display: flex; flex-direction: column; background: #f0f0f0; margin-right: 1px; }
.sb { height: 27px; flex: none; position: relative; background: #f0f0f0; }
.sb::after { content: ""; position: absolute; left: 5px; width: 6px; height: 6px; border: solid #555; border-width: 2px 0 0 2px; transform: rotate(45deg); top: 11px; }
.down::after { transform: rotate(225deg); top: 10px; }
.thumb { height: 265px; background: #cdcdcd; flex: none; }
.rest { flex: 1; }

.right { flex: 1; min-width: 0; display: flex; flex-direction: column; }
.r2 .tg, .r3 .tg, .r4 .tg { height: 27px; }
.g21 { margin-left: 8px; width: 788px; padding-left: 3px; gap: 5.800px; }
.g21 .dots { margin-right: -3px; }
.g21 .t { gap: 3.500px; }
.g21 .t + .t { margin-left: 2px; }
.g21 .c { margin: 0 -4px 0 1px; }
.r3 { padding-bottom: 1px; }
.g31 { margin-left: 8px; width: 565px; padding-left: 3px; }
.g31 .t { gap: 2px; }
.combo { background: #fff; height: 21px; display: inline-flex; align-items: center; justify-content: space-between; padding: 0 4px 0 2px; flex: none; font-size: 12.500px; }
.combo .c { margin-left: 3px; }
.cb1 { width: 55px; margin-left: 1px; }
.cb2 { width: 72px; margin-left: 4px; }
.cb3 { width: 68px; margin-left: 2px; }
.cb4 { width: 68px; margin-left: 4px; margin-right: 2px; }
.g31 .sep { margin-right: 3px; }
.g31 .sel { width: 51px; padding-left: 3px; margin-right: 5px; }
.g31 .t + .t { margin-right: 9.500px; }
.g32 { margin-left: 73px; width: 423px; padding-left: 4px; gap: 7px; }
.g32 .dots { margin-right: -1px; }
.g32 .t { gap: 3px; }
.g32 .c { margin-left: 5px; }
.g41 { margin-left: 8px; width: 885px; padding-left: 3px; gap: 6.500px; font-size: 12px; }
.g41 > .dots:first-child { margin-right: -3px; }
.g41 > .dots:last-child { margin-left: 3px; }
.hidspace { width: 316px; flex: none; }
.g41 .c { margin-left: 4px; }
.g41 .t { gap: 3.500px; }
.g41 .wd { gap: 5.500px; }
.g41 .sm { margin-right: -2.500px; }
.canvas { height: 507px; flex: none; margin-left: 5px; background: #000; overflow: hidden; }
.scene { display: block; width: 100%; height: 100%; }
.axtxt { fill: #c8c8c8; font: 400 13px "Liberation Mono", monospace; text-anchor: middle; }
.snap { height: 30px; padding-top: 2px; }
.gsnap { margin-left: 218px; width: 674px; padding-left: 3px; gap: 2px; }
.gsnap .t { gap: 3px; height: 24px; }
.gsnap .s0 { margin-left: 2px; }
.gsnap .s1 { padding: 0 3px; width: 51px; margin-left: 2px; }
.gsnap .s2 { padding: 0 3px; width: 51px; margin-left: -2px; margin-right: 1px; }
.gsnap .s3 { margin-left: 6px; }
.cb5 { width: 59px; height: 22px; margin: 0 2px 0 8px; padding-right: 3px; }
.lb { color: #666; padding: 0 1px; }
.spin { height: 23px; border: 1px solid #8a8a8a; background: #f6f6f6; color: #888; display: flex; align-items: center; justify-content: flex-end; flex: none; padding-right: 15px; position: relative; font-size: 12.500px; }
.spn { position: absolute; right: 3px; top: 4px; width: 7px; height: 13px; background: linear-gradient(135deg, transparent 50%, #555 50%) 0 0/3.500px 4px no-repeat, linear-gradient(225deg, transparent 50%, #555 50%) 3.500px 0/3.500px 4px no-repeat, linear-gradient(45deg, transparent 50%, #555 50%) 0 100%/3.500px 4px no-repeat, linear-gradient(315deg, transparent 50%, #555 50%) 3.500px 100%/3.500px 4px no-repeat; }
.sp1 { width: 48px; margin: 0 9px 0 2px; }
.sp2 { width: 58px; margin: 0 0 0 2px; }
.mm2 { margin: 0 0 0 -3px; }
.sp3 { width: 68px; margin: 0 2px; }
.cbx { width: 12px; height: 12px; border: 1px solid #888; background: #fff; flex: none; }
.rot { margin: 0 0 0 6px; }

.status { height: 19px; flex: none; display: flex; gap: 2px; background: #f1f1f1; white-space: nowrap; }
.st { background: #f8f8f8; border: 1px solid #d5d5d5; display: flex; align-items: center; padding-left: 1px; font-size: 12px; }
.st em { letter-spacing: -.2px; }
.mono { font: 10.500px "Liberation Mono", monospace; }
.s-a { width: 148px; }
.s-b { width: 77px; }
.s-c { width: 98px; }
.s-d { width: 50px; }
.s-e { width: 915px; }
.s-f { width: 68px; }

.taskbar { height: 41px; flex: none; display: grid; grid-template-columns: 48px 344px 49px 51px 50px 42px 34px 36px 38px 38px 38px 38px 38px 39px 39px 23px 40px 65px 28px 25px 23px 24px 30px 27px 29px 78px 52px; background: linear-gradient(#000, #05090d); color: #dfdfdf; }
.tk { display: flex; align-items: center; justify-content: center; position: relative; }
.ti { width: 22px; height: 22px; }
.tl { width: 24px; height: 24px; }
.kb { width: 24px; }
.search { background: #333; display: flex; align-items: center; padding-left: 9px; }
.cort { width: 21px; height: 21px; border-radius: 50%; border: 3px solid #eee; }
.stext { margin-left: 6px; color: #8a8a8a; font-size: 13.500px; width: 268px; }
.smic { margin-left: 12px; }
.tsep { width: 3px; height: 18px; border: solid #555; border-width: 0 1px; }
.run { background: linear-gradient(#76b9ed, #76b9ed) 50% 100%/28px 2px no-repeat; }
.act { background: linear-gradient(#76b9ed, #76b9ed) 50% 100%/100% 2px no-repeat, #2f3e4b; }
.ttxt { font-size: 12px; white-space: nowrap; }
.two { flex-direction: column; gap: 4px; }
.big { font-size: 14px; }
.clock { font-size: 12.500px; }
.nf { justify-content: flex-start; padding-left: 3px; }
.nbadge { position: absolute; left: 13px; top: 22px; width: 15px; height: 15px; border-radius: 50%; background: #3a3a3a; color: #fff; font: 700 10px "Liberation Sans", sans-serif; display: flex; align-items: center; justify-content: center; }

.ball { position: absolute; left: 1012px; top: -27px; width: 46px; height: 46px; border-radius: 50%; background: radial-gradient(circle at 50% 60%, #66d05a, #2fa83a 75%); box-shadow: 0 1px 0 2px #d8d8d8, 0 3px 3px #aaa; color: #fff; font: 700 12px "Liberation Sans", sans-serif; display: flex; align-items: flex-end; justify-content: center; padding-bottom: 6px; }
.ime { position: absolute; left: 813px; top: 3px; width: 185px; height: 24px; background: #fdfdfd; border: 1px solid #9cc0dc; display: flex; align-items: center; gap: 6px; padding-left: 11px; }
.imes { position: absolute; left: -21px; top: 0; width: 28px; height: 27px; }
.imeen { color: #1b73c9; font-size: 14px; }
.imedot { color: #1b73c9; font-weight: 700; margin: 0 3px; }
.ime .i { width: 15px; height: 15px; }

.dialog { position: absolute; left: 356px; top: 129px; width: 330px; height: 494px; background: #fff; border: 1px solid #c4c4c4; border-top: 2px solid #3a96dd; box-shadow: 1px 1px 3px rgba(0,0,0,.4); }
.dhead { height: 29px; display: flex; align-items: center; padding-left: 6px; position: relative; font-size: 12.500px; }
.dx { position: absolute; right: 0; top: 5px; width: 19px; height: 19px; background: #c75050; color: #fff; font: 700 11px "Liberation Sans", sans-serif; display: flex; align-items: center; justify-content: center; }
.ptable { border-collapse: collapse; table-layout: fixed; width: 328px; font-size: 12px; margin-left: -1px; }
.c0 { width: 21px; } .c1 { width: 121px; } .c2 { width: 154px; } .c3 { width: 32px; }
.ptable th, .ptable td { border: 1px solid #c2c2c2; height: 19px; padding: 0; font-weight: 400; white-space: nowrap; overflow: hidden; }
.ptable tr { height: 19px; }
.ptable th { height: 23px; background: linear-gradient(#fbfbfb, #e8e8e8); }
.ptable .hv { background: linear-gradient(#fcdca0, #f3c26a); color: #660066; font-size: 12.500px; }
.n { text-align: center; background: #f3f3f3; font: 11px "Liberation Mono", monospace; }
.nm { padding-left: 20px !important; }
.blue { color: #0000f0; }
.v { padding-left: 2px !important; }
.sub { padding-left: 30px !important; background: linear-gradient(#bbb, #bbb) 9px 0/1px 100% no-repeat, linear-gradient(#bbb, #bbb) 9px 50%/16px 1px no-repeat; }
.end { background: linear-gradient(#ddd, #ddd) 9px 0/1px 50% no-repeat, linear-gradient(#ddd, #ddd) 9px 50%/16px 1px no-repeat, #0078d7; }
.on .sub { color: #fff; }
.on .v { background: #d9e9f7; }
.on .n { background: #fbd69e; color: #660066; }
.gp { color: #8c8c8c; padding-left: 3px !important; }
.bx { display: inline-block; width: 12px; height: 12px; border: 1px solid #bbb; color: #222; text-align: center; font: 12px/10px "Liberation Sans", sans-serif; margin-right: 5px; vertical-align: -1px; }
.ck { text-align: center; }
.ck i { display: block; width: 13px; height: 13px; border: 1px solid #333; margin: 0 auto; background: #fff; }
.ring { position: absolute; inset: 0; width: 1366px; height: 768px; pointer-events: none; }
```
